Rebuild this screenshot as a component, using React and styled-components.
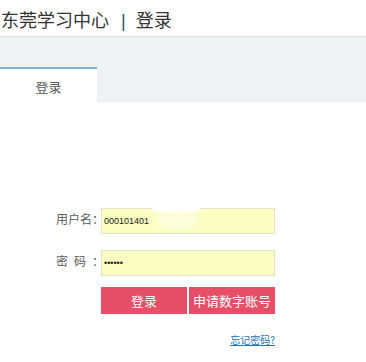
import React from 'react'
import styled, { createGlobalStyle } from 'styled-components';

const GlobalStyle = createGlobalStyle`
body {
    margin: 0;
    background: #fff;
    font-family: "Noto Sans CJK SC", "Noto Sans", sans-serif;
}
`

function App() {
    return (
        <Page>
            <GlobalStyle />
            <Header>
                东莞学习中心<Divider>|</Divider>登录
            </Header>
            <TabBar>
                <Tab>登录</Tab>
            </TabBar>
            <Form>
                <Row>
                    <Label><span>用</span><span>户</span><span>名</span><span>：</span></Label>
                    <InputWrap>
                        <Input defaultValue="000101401" />
                        <Redact />
                    </InputWrap>
                </Row>
                <Row>
                    <Label><span>密</span><span>码</span><span>：</span></Label>
                    <InputWrap>
                        <Input type="password" defaultValue="123456" />
                    </InputWrap>
                </Row>
                <Buttons>
                    <Button>登录</Button>
                    <Button>申请数字账号</Button>
                </Buttons>
                <Forgot href="#">忘记密码?</Forgot>
            </Form>
        </Page>
    )
}

export default App

const Page = styled.div`
width: 366px;
min-height: 362px;
overflow: hidden;
`

const Header = styled.div`
height: 36px;
line-height: 38px;
padding-left: 1px;
font-size: 18px;
color: #333;
background: #fff;
border-bottom: 1px solid #d9dde0;
box-shadow: 0 1px 2px rgba(0,0,0,0.06);
white-space: nowrap;
`

const Divider = styled.span`
display: inline-block;
margin: 0 10px 0 12px;
color: #2d4f73;
font-family: "Liberation Sans", sans-serif;
font-size: 18px;
`

const TabBar = styled.div`
background: #edf2f5;
padding-top: 30px;
display: flex;
`

const Tab = styled.div`
width: 97px;
height: 33px;
border-top: 2px solid #80b2da;
background: #fff;
color: #555;
font-size: 13px;
line-height: 35px;
text-align: center;
`

const Form = styled.div`
margin: 103px 0 0 56px;
width: 219px;
display: flex;
flex-direction: column;
`

const Row = styled.div`
display: flex;
align-items: center;
height: 26px;
margin-bottom: 16px;
`

const Label = styled.label`
flex: none;
width: 48px;
margin-right: -3px;
display: flex;
justify-content: space-between;
font-size: 12px;
color: #5a5a5a;
white-space: nowrap;
`

const InputWrap = styled.div`
position: relative;
width: 174px;
height: 26px;
`

const Input = styled.input`
box-sizing: border-box;
width: 100%;
height: 100%;
margin: 0;
padding: 0 2px;
border: 1px solid #e2e2cc;
background: #fbfdc2;
font-family: "Liberation Sans", sans-serif;
font-size: 9px;
color: #222;
outline: none;
`

const Redact = styled.div`
position: absolute;
left: 51px;
top: -6px;
width: 48px;
height: 13px;
background: #fff;
border-radius: 4px;
filter: blur(1px);
&::after {
    content: "";
    position: absolute;
    left: 4px;
    top: 12px;
    width: 44px;
    height: 18px;
    border-radius: 50%;
    background: rgba(255,255,235,0.7);
    filter: blur(3px);
}
`

const Buttons = styled.div`
margin: -2px 0 0 45px;
display: flex;
gap: 2px;
`

const Button = styled.button`
width: 86px;
height: 27px;
border: none;
margin: 0;
padding: 0;
background: #e64f67;
color: #fff;
font-family: "Noto Sans CJK SC", sans-serif;
font-size: 13px;
cursor: pointer;
`

const Forgot = styled.a`
align-self: flex-end;
margin-top: 19px;
font-size: 10px;
line-height: 14px;
color: #2472b8;
text-decoration: underline;
`
